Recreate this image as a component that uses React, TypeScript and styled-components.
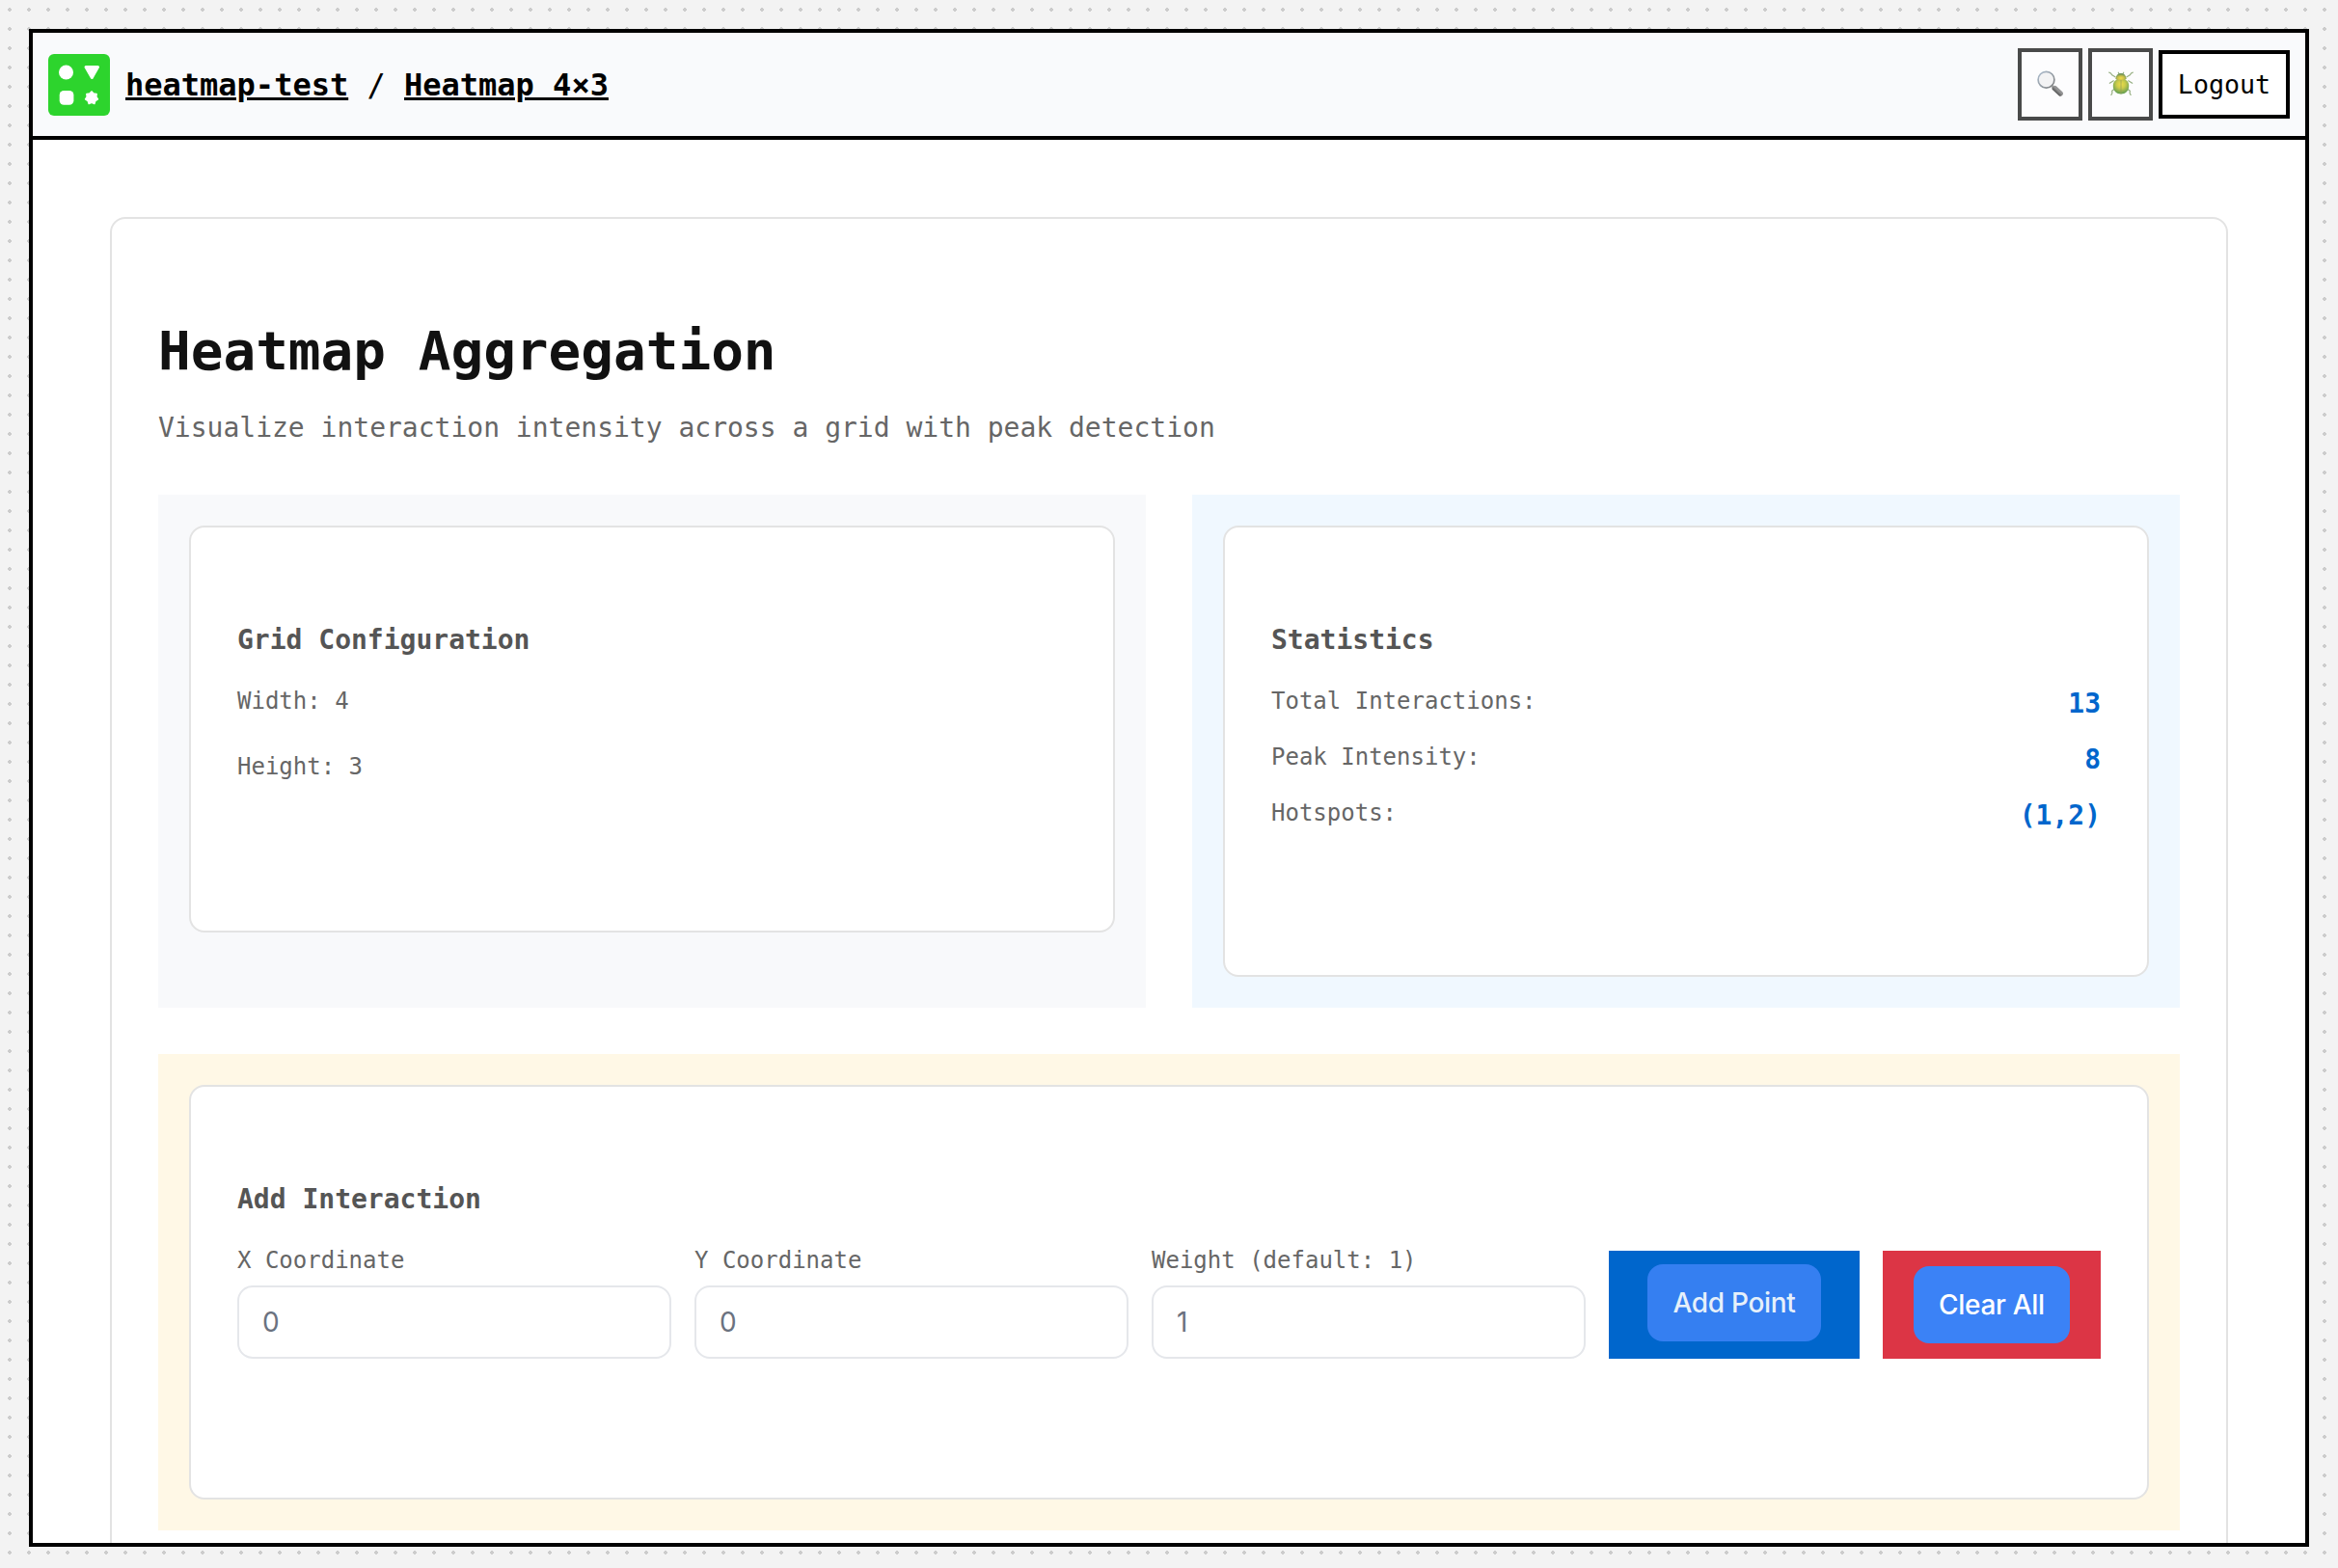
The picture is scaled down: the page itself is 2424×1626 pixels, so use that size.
import React from "react";
import styled, { createGlobalStyle, css } from "styled-components";

const mono = `"DejaVu Sans Mono", monospace`;
const sans = `Inter, sans-serif`;

const GlobalStyle = createGlobalStyle`
  *, *::before, *::after { box-sizing: border-box; }
  html, body { margin: 0; padding: 0; overflow: hidden; }
  body { font-family: ${mono}; }
  h1, h2, p { margin: 0; }
`;

const Backdrop = styled.div`
  height: 1626px;
  padding: 30px 30px 22px;
  background-color: #f3f3f3;
  background-image: radial-gradient(circle at center, #ccc 2px, transparent 2px);
  background-size: 20px 20px;
`;

const Frame = styled.div`
  display: flex;
  flex-direction: column;
  height: 1574px;
  border: 4px solid #000;
  background: #fff;
  overflow: hidden;
`;

const Header = styled.header`
  display: flex;
  flex: none;
  align-items: center;
  height: 111px;
  padding: 0 16px;
  border-bottom: 4px solid #000;
  background: #f9fafc;
`;

const Logo = styled.svg`
  display: block;
  width: 64px;
  height: 64px;
  margin-right: 16px;
`;

const Crumbs = styled.nav`
  flex: 1;
  font-size: 32px;
  line-height: 38px;
  white-space: pre;
`;

const Crumb = styled.a`
  color: #000;
  font-weight: 700;
  text-decoration: underline;
  text-decoration-thickness: 3px;
  text-underline-offset: 2px;
`;

const Actions = styled.div`
  display: flex;
  align-items: center;
  gap: 6px;
`;

const IconButton = styled.button`
  display: flex;
  align-items: center;
  justify-content: center;
  width: 67px;
  height: 75px;
  padding: 0 0 2px;
  border: 4px solid #000;
  background: #fff;
  opacity: 0.7;
`;

const LogoutButton = styled.button`
  height: 71px;
  width: 136px;
  padding: 0;
  border: 4px solid #000;
  background: #fff;
  color: #000;
  font: 26.667px/31px ${mono};
`;

const Content = styled.main`
  flex: 1;
  min-height: 0;
  padding: 80px 80px 0;
`;

const Card = styled.section<{ $height: number }>`
  height: ${(p) => p.$height}px;
  padding: 96px 48px 0;
  border: 2px solid #e3e3e3;
  border-radius: 16px;
  background: #fff;
`;

const Title = styled.h1`
  padding-top: 2px;
  color: #111;
  font-size: 56px;
  font-weight: 700;
  line-height: 78px;
`;

const Subtitle = styled.p`
  margin-top: 17px;
  color: #666;
  font-size: 28px;
  line-height: 48px;
`;

const Columns = styled.div`
  display: grid;
  grid-template-columns: 1fr 1fr;
  gap: 48px;
  margin-top: 45px;
`;

const Panel = styled.div<{ $tone: string }>`
  padding: 32px;
  background: ${(p) => p.$tone};
`;

const AddPanel = styled(Panel)`
  margin-top: 48px;
`;

const Heading = styled.h2`
  color: #555;
  font-size: 28px;
  font-weight: 700;
  line-height: 42px;
`;

const ConfigList = styled.div`
  display: grid;
  gap: 32px;
  margin-top: 24px;
`;

const ConfigLine = styled.p`
  color: #666;
  font-size: 24px;
  line-height: 36px;
`;

const StatRow = styled.div`
  display: flex;
  justify-content: space-between;
  height: 42px;
  margin-bottom: 16px;
`;

const StatList = styled.div`
  margin-top: 24px;
`;

const StatLabel = styled.span`
  color: #666;
  font-size: 24px;
  line-height: 36px;
`;

const StatValue = styled.span`
  color: #06c;
  font-size: 28px;
  font-weight: 700;
  line-height: 42px;
`;

const Form = styled.form`
  display: flex;
  align-items: flex-end;
  gap: 24px;
  margin-top: 24px;
`;

const Field = styled.label`
  display: flex;
  flex: 1;
  flex-direction: column;
  gap: 8px;
  color: #666;
  font-size: 24px;
  line-height: 36px;
`;

const Input = styled.input`
  width: 100%;
  height: 76px;
  padding: 0 24px;
  border: 2px solid #e5e7eb;
  border-radius: 16px;
  outline: 0;
  background: #fff;
  font: 28px ${sans};
  &::placeholder { color: #6b7280; opacity: 1; }
`;

const ButtonSlot = styled.div<{ $tone: string; $width: number }>`
  display: flex;
  flex: none;
  align-items: flex-start;
  justify-content: center;
  width: ${(p) => p.$width}px;
  height: 112px;
  padding-top: 16px;
  background: ${(p) => p.$tone};
`;

const Button = styled.button<{ $width: number; $raised?: boolean }>`
  width: ${(p) => p.$width}px;
  height: 80px;
  padding: 0;
  border: 0;
  border-radius: 16px;
  background: #3b82f6;
  color: #fff;
  font: 500 28px ${sans};
  letter-spacing: -0.3px;
  ${(p) => p.$raised && css`
    opacity: 0.9;
    transform: translateY(-2px);
  `}
`;

const stats = [
  { label: "Total Interactions:", value: "13" },
  { label: "Peak Intensity:", value: "8" },
  { label: "Hotspots:", value: "(1,2)" },
];

const fields = [
  { label: "X Coordinate", hint: "0" },
  { label: "Y Coordinate", hint: "0" },
  { label: "Weight (default: 1)", hint: "1" },
];

const starPoints = Array.from({ length: 14 }, (_, i) => {
  const radius = i % 2 === 0 ? 6.6 : 4.9;
  const angle = (i * Math.PI) / 7 - Math.PI / 2;
  return `${45 + radius * Math.cos(angle)},${45.5 + radius * Math.sin(angle)}`;
}).join(" ");

const Magnifier = () => (
  <svg width="28" height="28" viewBox="0 0 28 28" fill="none">
    <defs>
      <linearGradient id="rim" x1="0" y1="0" x2="1" y2="1">
        <stop offset="0" stopColor="#8fa6bd" />
        <stop offset="1" stopColor="#4a4a4a" />
      </linearGradient>
      <linearGradient id="handle" x1="0" y1="1" x2="0.6" y2="0.4">
        <stop offset="0.300" stopColor="#111" />
        <stop offset="1" stopColor="#6a6a6a" />
      </linearGradient>
    </defs>
    <path d="m15.500 16 2.500 2.500" stroke="#888" strokeWidth="2.500" />
    <path d="m18.300 18.600 5.900 5.400" stroke="url(#handle)" strokeWidth="5.400" strokeLinecap="round" />
    <circle cx="9.500" cy="9.700" r="8.400" fill="#f1f1f2" stroke="url(#rim)" strokeWidth="1.700" />
  </svg>
);

const Beetle = () => (
  <svg width="28" height="28" viewBox="0 0 28 28" fill="none">
    <defs>
      <radialGradient id="shell" cx="0.5" cy="0.35" r="0.600">
        <stop offset="0" stopColor="#e8d400" />
        <stop offset="0.450" stopColor="#b9b800" />
        <stop offset="1" stopColor="#2f7d0c" />
      </radialGradient>
      <radialGradient id="head" cx="0.5" cy="0.700" r="0.600">
        <stop offset="0" stopColor="#f0cf00" />
        <stop offset="0.500" stopColor="#b5a800" />
        <stop offset="1" stopColor="#2c6414" />
      </radialGradient>
    </defs>
    <g stroke="#6f9150" strokeWidth="1.200" strokeLinecap="round" strokeLinejoin="round">
      <path d="M1.700 2.200q2 .3 3 2.600l3.300 2M26.300 2.200q-2 .3-3 2.600l-3.300 2" />
      <path d="m2.300 13.300 4-2.500M25.700 13.300l-4-2.500" />
      <path d="m7 19.500-2.300 1.700.2 2.200-1 2M21 19.500l2.300 1.700-.2 2.200 1 2" />
      <path d="m12.200 4-.9-1.800M15.800 4l.9-1.800" />
    </g>
    <path d="M5.800 16c0-4.500 2.700-7 8.200-7s8.200 2.500 8.200 7c0 5.300-3.700 8.500-8.200 8.500S5.800 21.300 5.800 16Z" fill="url(#shell)" />
    <path d="M8.300 8.700C8.800 5 11 3 14 3s5.200 2 5.700 5.700C18 10.800 10 10.800 8.300 8.700Z" fill="url(#head)" />
    <path d="M14 10v14.300" stroke="#6c7a10" strokeWidth=".8" />
  </svg>
);

export default function App() {
  return (
    <>
      <GlobalStyle />
      <Backdrop>
        <Frame>
          <Header>
            <Logo viewBox="0 0 64 64">
              <rect width="64" height="64" rx="6" fill="#2dd42d" />
              <g fill="#fff" stroke="#fff" strokeLinejoin="round">
                <circle cx="18.5" cy="19" r="7.5" stroke="none" />
                <path d="M39 13.500h12.500L45.300 24.500Z" strokeWidth="3" />
                <rect x="11.700" y="38" width="14.700" height="14.700" rx="4.500" stroke="none" />
                <polygon points={starPoints} strokeWidth="1.500" />
              </g>
            </Logo>
            <Crumbs>
              <Crumb>heatmap-test</Crumb> / <Crumb>Heatmap 4×3</Crumb>
            </Crumbs>
            <Actions>
              <IconButton aria-label="Search"><Magnifier /></IconButton>
              <IconButton aria-label="Debug"><Beetle /></IconButton>
              <LogoutButton>Logout</LogoutButton>
            </Actions>
          </Header>
          <Content>
            <Card $height={1500}>
              <Title>Heatmap Aggregation</Title>
              <Subtitle>Visualize interaction intensity across a grid with peak detection</Subtitle>
              <Columns>
                <Panel $tone="#f8f9fb">
                  <Card $height={422}>
                    <Heading>Grid Configuration</Heading>
                    <ConfigList>
                      <ConfigLine>Width: 4</ConfigLine>
                      <ConfigLine>Height: 3</ConfigLine>
                    </ConfigList>
                  </Card>
                </Panel>
                <Panel $tone="#f0f8ff">
                  <Card $height={468}>
                    <Heading>Statistics</Heading>
                    <StatList>
                      {stats.map((s) => (
                        <StatRow key={s.label}>
                          <StatLabel>{s.label}</StatLabel>
                          <StatValue>{s.value}</StatValue>
                        </StatRow>
                      ))}
                    </StatList>
                  </Card>
                </Panel>
              </Columns>
              <AddPanel $tone="#fff8e6">
                <Card $height={430}>
                  <Heading>Add Interaction</Heading>
                  <Form>
                    {fields.map((f) => (
                      <Field key={f.label}>
                        {f.label}
                        <Input placeholder={f.hint} />
                      </Field>
                    ))}
                    <ButtonSlot $tone="#06c" $width={260}>
                      <Button type="button" $width={180} $raised>Add Point</Button>
                    </ButtonSlot>
                    <ButtonSlot $tone="#dc3545" $width={226}>
                      <Button type="button" $width={162}>Clear All</Button>
                    </ButtonSlot>
                  </Form>
                </Card>
              </AddPanel>
            </Card>
          </Content>
        </Frame>
      </Backdrop>
    </>
  );
}
